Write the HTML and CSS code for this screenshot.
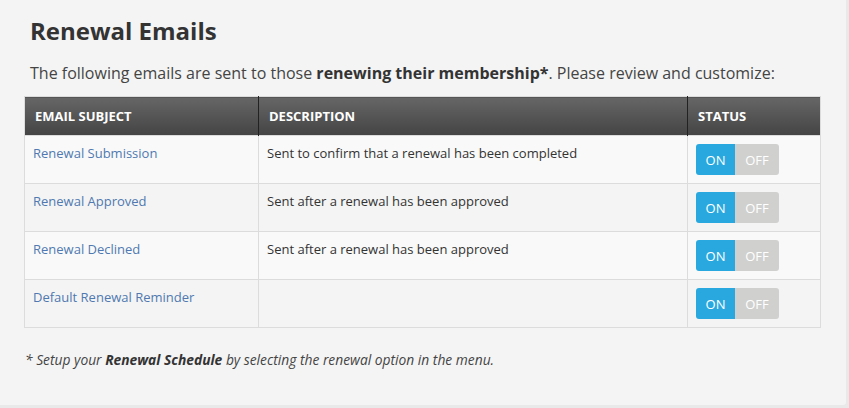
FILE: index.html
```html
<!DOCTYPE html>
<html lang="en">
<head>
  <meta charset="UTF-8">
  <title>Renewal Emails</title>
  <link rel="stylesheet" href="styles.css">
</head>
<body>
  <div class="panel">
    <h1>Renewal Emails</h1>
    <p class="intro">The following emails are sent to those <strong>renewing their membership*</strong>. Please review and customize:</p>

    <table class="emails">
      <thead>
        <tr>
          <th class="col-subject">Email Subject</th>
          <th class="col-desc">Description</th>
          <th class="col-status">Status</th>
        </tr>
      </thead>
      <tbody>
        <tr>
          <td><a href="#">Renewal Submission</a></td>
          <td>Sent to confirm that a renewal has been completed</td>
          <td><div class="toggle"><span class="on">ON</span><span class="off">OFF</span></div></td>
        </tr>
        <tr>
          <td><a href="#">Renewal Approved</a></td>
          <td>Sent after a renewal has been approved</td>
          <td><div class="toggle"><span class="on">ON</span><span class="off">OFF</span></div></td>
        </tr>
        <tr>
          <td><a href="#">Renewal Declined</a></td>
          <td>Sent after a renewal has been approved</td>
          <td><div class="toggle"><span class="on">ON</span><span class="off">OFF</span></div></td>
        </tr>
        <tr>
          <td><a href="#">Default Renewal Reminder</a></td>
          <td></td>
          <td><div class="toggle"><span class="on">ON</span><span class="off">OFF</span></div></td>
        </tr>
      </tbody>
    </table>

    <p class="note">* Setup your <strong>Renewal Schedule</strong> by selecting the renewal option in the menu.</p>
  </div>
</body>
</html>
```

FILE: styles.css
```css
body {
  font-family: 'Open Sans', 'DejaVu Sans', sans-serif;
  margin: 0;
  background-color: #e9e9e9;
  color: #333;
}

.panel {
  width: 846px;
  height: 405px;
  box-sizing: border-box;
  padding: 14px 0 0 24px;
  background-color: #f4f4f4;
  border-bottom-right-radius: 3px;
}

h1 {
  margin: 0 0 0 6px;
  font-size: 24px;
  font-weight: 700;
  line-height: 34px;
  color: #333;
}

.intro {
  margin: 14px 0 0 6px;
  font-size: 16px;
  line-height: 22px;
  color: #444;
}

.intro strong {
  color: #333;
}

.emails {
  margin-top: 12px;
  width: 797px;
  border-collapse: collapse;
  border: 1px solid #dcdcdc;
  font-size: 13px;
}

.emails th {
  height: 38px;
  padding: 0 10px;
  text-align: left;
  font-size: 13px;
  font-weight: 700;
  text-transform: uppercase;
  color: #fff;
  background: linear-gradient(#666, #444);
  border-left: 1px solid #222;
}

.emails th:first-child {
  border-left: none;
}

.col-subject { width: 213px; }
.col-desc { width: 408px; }

.emails td {
  height: 48px;
  box-sizing: border-box;
  padding: 8px 8px 0;
  vertical-align: top;
  border: 1px solid #dcdcdc;
  background-color: #f9f9f9;
}

.emails tbody tr:nth-child(even) td {
  background-color: #f4f4f4;
}

.emails a {
  color: #4f79b0;
  text-decoration: none;
}

.toggle {
  display: flex;
  width: 83px;
  height: 31px;
  border-radius: 3px;
  overflow: hidden;
  font-size: 13px;
  color: #fff;
}

.toggle span {
  display: flex;
  align-items: center;
  justify-content: center;
}

.toggle .on {
  width: 39px;
  background-color: #29a8e0;
}

.toggle .off {
  flex: 1;
  background-color: #d0d0cf;
}

.note {
  margin: 22px 0 0 1px;
  font-size: 13.8px;
  font-style: italic;
  color: #444;
}

.note strong {
  color: #333;
}
```
